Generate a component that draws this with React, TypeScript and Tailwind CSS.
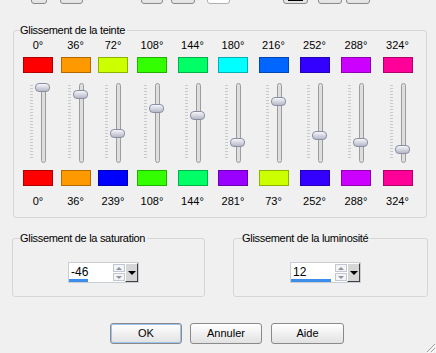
import React from "react";

type Col = { a: string; ac: string; b: string; bc: string; y: number };

// y = centre of the slider thumb, in page pixels
const cols: Col[] = [
  { a: "0°",   ac: "#ff0000", b: "0°",   bc: "#ff0000", y: 87 },
  { a: "36°",  ac: "#ff9900", b: "36°",  bc: "#ff9900", y: 94 },
  { a: "72°",  ac: "#ccff00", b: "239°", bc: "#0000ff", y: 133 },
  { a: "108°", ac: "#33ff00", b: "108°", bc: "#33ff00", y: 108 },
  { a: "144°", ac: "#00ff66", b: "144°", bc: "#00ff66", y: 115 },
  { a: "180°", ac: "#00ffff", b: "281°", bc: "#9900ff", y: 142 },
  { a: "216°", ac: "#0066ff", b: "73°",  bc: "#ccff00", y: 101 },
  { a: "252°", ac: "#3300ff", b: "252°", bc: "#3300ff", y: 135 },
  { a: "288°", ac: "#cc00ff", b: "288°", bc: "#cc00ff", y: 142 },
  { a: "324°", ac: "#ff0099", b: "324°", bc: "#ff0099", y: 149 },
];

const btn =
  "rounded-[3px] border border-[#8a8a8a] bg-gradient-to-b from-[#ffffff] to-[#e2e2e2]";

function Swatch({ c }: { c: string }) {
  return (
    <div
      className="h-[16px] w-[30px] border border-black/30"
      style={{ background: c }}
    />
  );
}

function Slider({ y }: { y: number }) {
  return (
    <div className="relative mt-[3px] flex h-[90px] w-[30px] pl-[7px]">
      {/* ticks */}
      <div className="mt-[9px] h-[75px] w-[3px] bg-[repeating-linear-gradient(to_bottom,#c9c9c9_0_1px,transparent_1px_3px)]" />
      {/* track */}
      <div className="ml-[8px] mt-[7px] h-[80px] w-[5px] rounded-full border border-[#9c9c9c] bg-[#dedede]" />
      {/* thumb */}
      <div
        className="absolute left-[12px] h-[9px] w-[15px] rounded-[4px] border border-[#8a8ea0] bg-gradient-to-b from-[#f6f6fa] to-[#b5b9c8]"
        style={{ top: y - 4.5 - 76 }}
      />
    </div>
  );
}

function Spin({ value, bar }: { value: string; bar: number }) {
  return (
    <div className="flex h-[21px] border border-[#c9ced6] bg-white">
      <div className="relative w-[44px] pl-[2px] pt-[3px] text-[12px] leading-[13px]">
        {value}
        <div
          className="absolute bottom-[0px] left-0 h-[3px] bg-[#3d8ee8]"
          style={{ width: bar }}
        />
      </div>
      <div className="flex w-[12px] flex-col justify-center gap-[1px] py-[1px]">
        <div className="flex h-[8px] items-center justify-center border border-[#c2c8d2] bg-[#f4f4f4]">
          <div className="h-0 w-0 border-x-[3px] border-b-[3px] border-x-transparent border-b-[#8a93a3]" />
        </div>
        <div className="flex h-[8px] items-center justify-center border border-[#c2c8d2] bg-[#f4f4f4]">
          <div className="h-0 w-0 border-x-[3px] border-t-[3px] border-x-transparent border-t-[#8a93a3]" />
        </div>
      </div>
      <div className="flex w-[13px] items-center justify-center border border-b-[#404040] border-l-[#ffffff] border-r-[#404040] border-t-[#ffffff] bg-[#d6d6d6]">
        <div className="h-0 w-0 border-x-[4px] border-t-[4px] border-x-transparent border-t-black" />
      </div>
    </div>
  );
}

export default function App() {
  return (
    <div className="relative h-[353px] w-[436px] overflow-hidden bg-[#f0f0f0] font-['Liberation_Sans',Arial,sans-serif] text-[11px] leading-[13px] text-black">
      {/* toolbar buttons cut off at the top */}
      <div className="-mt-[17px] flex h-[21px]">
        <div className={`${btn} ml-[31px] w-[16px]`} />
        <div className={`${btn} ml-[13px] w-[23px]`} />
        <div className={`${btn} ml-[58px] w-[22px]`} />
        <div className={`${btn} ml-[8px] w-[24px]`} />
        <div className={`${btn} ml-[12px] w-[23px] border-[#b0b0b0] from-white to-white`} />
        <div className={`${btn} ml-[53px] flex w-[25px] items-end justify-center pb-[2px]`}>
          <div className="h-[14px] w-[15px] border border-black bg-white" />
        </div>
        <div className={`${btn} ml-[10px] w-[24px]`} />
        <div className={`${btn} ml-[4px] w-[24px]`} />
      </div>

      {/* Glissement de la teinte */}
      <div className="relative ml-[13px] mt-[26px] h-[188px] w-[414px] rounded-[3px] border border-[#d6d6d6]">
        <span className="absolute -top-[7px] left-[6px] bg-[#f0f0f0] pr-[2px] tracking-[-0.3px]">
          Glissement de la teinte
        </span>
        <div className="ml-[5px] grid grid-cols-[38px_37px_38px_40px_41px_40px_41px_41px_42px_41px] pt-[8px]">
          {cols.map((c) => (
            <div key={c.a + c.b} className="flex flex-col items-center">
              <div className="h-[13px]">{c.a}</div>
              <div className="mt-[5px]">
                <Swatch c={c.ac} />
              </div>
              <Slider y={c.y} />
              <div className="mt-[4px]">
                <Swatch c={c.bc} />
              </div>
              <div className="mt-[9px] h-[13px]">{c.b}</div>
            </div>
          ))}
        </div>
      </div>

      {/* saturation / luminosité */}
      <div className="mt-[20px] flex">
        <div className="relative ml-[12px] h-[59px] w-[193px] rounded-[3px] border border-[#d6d6d6]">
          <span className="absolute -top-[7px] left-[7px] bg-[#f0f0f0] pr-[2px] tracking-[-0.3px]">
            Glissement de la saturation
          </span>
          <div className="ml-[55px] mt-[23px] w-fit">
            <Spin value="-46" bar={19} />
          </div>
        </div>
        <div className="relative ml-[28px] h-[59px] w-[195px] rounded-[3px] border border-[#d6d6d6]">
          <span className="absolute -top-[7px] left-[8px] bg-[#f0f0f0] pr-[2px] tracking-[-0.3px]">
            Glissement de la luminosité
          </span>
          <div className="ml-[56px] mt-[23px] w-fit">
            <Spin value="12" bar={40} />
          </div>
        </div>
      </div>

      {/* buttons */}
      <div className="ml-[110px] mt-[26px] flex gap-[8px]">
        <button className={`${btn} h-[21px] w-[72px] border-[#5a6a80] shadow-[inset_0_0_0_1px_#9cc2ee]`}>
          OK
        </button>
        <button className={`${btn} h-[21px] w-[72px]`}>Annuler</button>
        <button className={`${btn} ml-[1px] h-[21px] w-[73px]`}>Aide</button>
      </div>

      {/* size grip */}
      <svg className="absolute bottom-0 right-0" width="12" height="12" viewBox="0 0 12 12">
        <path d="M11 3 L3 11 M11 7 L7 11" stroke="#a0a0a0" strokeWidth="1" />
        <path d="M12 4 L4 12 M12 8 L8 12" stroke="#ffffff" strokeWidth="1" />
      </svg>
    </div>
  );
}
